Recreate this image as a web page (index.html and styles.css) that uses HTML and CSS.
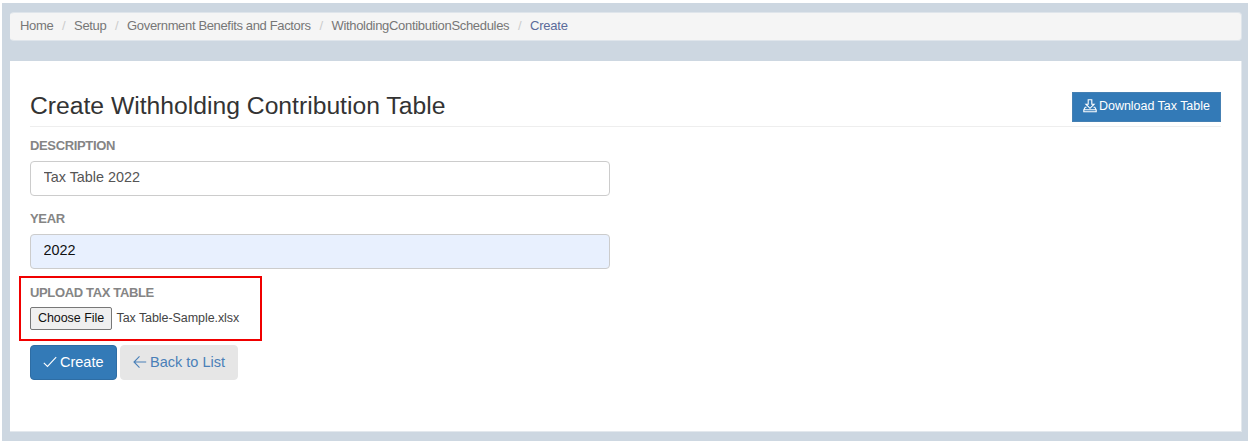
FILE: index.html
```html
<!DOCTYPE html>
<html lang="en">
<head>
<meta charset="utf-8">
<title>Create Withholding Contribution Table</title>
<link rel="stylesheet" href="styles.css">
</head>
<body>
<div class="page">
  <nav class="breadcrumb">
    <a>Home</a><i>/</i><a>Setup</a><i>/</i><a>Government Benefits and Factors</a><i>/</i><a class="wide">WitholdingContibutionSchedules</a><i>/</i><a class="current">Create</a>
  </nav>
  <main class="panel">
    <header class="heading">
      <h1>Create Withholding Contribution Table</h1>
      <button class="download"><svg width="14" height="14" viewBox="0 0 14 14"><path d="M5.2 .8h3.6v4.4h2.3L7 9.3 2.9 5.2h2.3zM3.5 8.2H2.2L.8 10.8v2h12.4v-2l-1.4-2.6h-1.3M.8 10.8h12.4"/></svg><span>Download Tax Table</span></button>
    </header>
    <form class="form">
      <label class="label">DESCRIPTION</label>
      <input class="field" type="text" value="Tax Table 2022">
      <label class="label">YEAR</label>
      <input class="field filled" type="text" value="2022">
      <div class="upload">
        <label class="label">UPLOAD TAX TABLE</label>
        <div class="file"><button type="button" class="choose">Choose File</button><span class="filename">Tax Table-Sample.xlsx</span></div>
      </div>
      <div class="actions">
        <button type="button" class="btn primary"><svg width="14" height="14" viewBox="0 0 14 14"><path d="M.8 7.8l3.7 3.7L13.2 2.2"/></svg><span>Create</span></button>
        <button type="button" class="btn back"><svg width="14" height="14" viewBox="0 0 14 14"><path d="M13.2 7H1M6.5 1.4L1 7l5.5 5.6"/></svg><span>Back to List</span></button>
      </div>
    </form>
  </main>
</div>
</body>
</html>
```
FILE: styles.css
```css
* { box-sizing: border-box; }
body { margin: 0; background: #fff; font-family: "Liberation Sans", Arial, sans-serif; overflow: hidden; }
button, input { font-family: inherit; margin: 0; }
svg { flex: none; fill: none; stroke: currentColor; stroke-width: 1.1; }
.page { margin: 3px 0 0 2px; height: 438px; background: #cdd7e1; padding: 9px 6px 0 8px; }
.breadcrumb { height: 29px; border: 1px solid #dfe5eb; border-left-color: #f5f5f5; border-radius: 4px; background: #f5f5f5; padding: 0 0 2px 9px; display: flex; align-items: center; font-size: 13px; letter-spacing: -.35px; color: #777; }
.breadcrumb i { width: 20.8px; text-align: center; font-style: normal; color: #ccc; }
.breadcrumb .wide { letter-spacing: -.31px; }
.breadcrumb .current { color: #5b6b9a; letter-spacing: -.25px; }
.panel { margin-top: 20px; height: 371px; background: #fff; border: solid #e3e8ed; border-width: 0 1px 1px 0; padding: 31px 20px 0; }
.heading { height: 35px; border-bottom: 1px solid #eee; display: flex; justify-content: space-between; }
h1 { margin: 0; font-size: 24.7px; line-height: 27px; font-weight: 400; color: #333; white-space: nowrap; }
.download { width: 149px; height: 30px; padding: 0 0 2px 10px; border: 1px solid #4580b3; background: #337ab7; color: #fff; display: flex; align-items: center; gap: 2px; font-size: 12.5px; letter-spacing: -.03px; white-space: nowrap; }
.form { width: 580px; display: flex; flex-direction: column; }
.label { display: block; font-size: 13px; font-weight: 700; line-height: 16px; letter-spacing: -.35px; color: #858585; margin-top: 11px; }
.field { display: block; width: 580px; height: 35px; margin: 7px 0 0; padding: 0 12.5px 3px; border: 1px solid #ccc; border-radius: 4px; font-size: 14.4px; color: #555; background: #fff; }
.field + .label { margin-top: 15px; }
.filled { background: #e8f0fe; color: #111; }
.upload { width: 243px; height: 65px; margin: 7px 0 0 -11px; border: 2px solid #f00000; padding: 7px 0 0 9px; }
.upload .label { margin: 0; }
.file { display: flex; align-items: center; margin-top: 6px; height: 23px; }
.choose { width: 82px; height: 23px; border: 1px solid #777; border-radius: 2px; background: #efefef; color: #111; padding: 0 0 1px; font-size: 12.5px; letter-spacing: -.05px; }
.filename { margin-left: 4.5px; font-size: 12.5px; letter-spacing: -.07px; color: #444; padding-bottom: 1px; }
.actions { display: flex; gap: 3px; margin-top: 4px; }
.btn { height: 35px; display: flex; align-items: center; gap: 3px; padding: 0 0 2px 12px; border-radius: 4px; font-size: 14.5px; border: 1px solid; white-space: nowrap; }
.primary { width: 87px; background: #337ab7; border-color: #2e6da4; color: #fff; }
.back { width: 118px; background: #e6e6e6; border-color: #e6e6e6; color: #4a80b8; }
```
